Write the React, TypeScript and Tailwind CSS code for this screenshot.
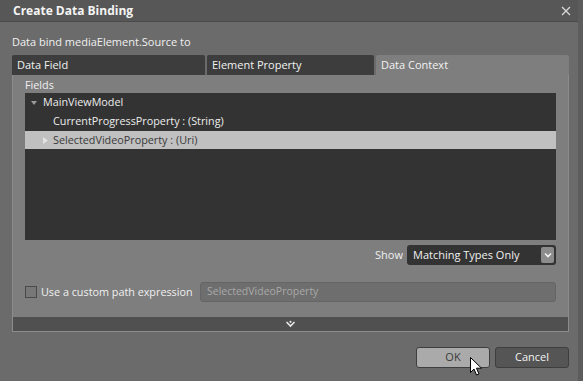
import React from "react";

const font = { fontFamily: '"Open Sans", "Noto Sans", sans-serif' };

const Tab = ({ label, active }: { label: string; active?: boolean }) => (
  <div
    className={
      "h-[20px] flex items-center px-[5px] rounded-t-[2px] text-[11px] " +
      (active ? "bg-[#7e7e7e] text-[#f2f2f2]" : "bg-[#3d3d3d] text-[#f2f2f2]")
    }
  >
    {label}
  </div>
);

export default function App() {
  return (
    <div
      className="relative w-[583px] h-[381px] bg-[#6b6b6b] border-r-[5px] border-[#5c5c5c] flex flex-col overflow-hidden"
      style={font}
    >
      {/* title bar */}
      <div className="h-[22px] shrink-0 bg-[#575757] border-b border-[#4b4b4b] flex items-center justify-between pl-[13px] pr-[7px]">
        <span className="text-[12px] font-bold text-[#f4f4f4] leading-none">Create Data Binding</span>
        <svg width="10" height="10" viewBox="0 0 10 10">
          <path d="M1 1 L9 9 M9 1 L1 9" stroke="#d8d8d8" strokeWidth="1.3" />
        </svg>
      </div>

      <div className="flex flex-col pl-[12px] pr-[9px] pt-[12px]">
        <div className="text-[11px] leading-[16px] text-[#f0f0f0]">Data bind mediaElement.Source to</div>

        {/* tabs */}
        <div className="mt-[5px] grid grid-cols-[193px_167px_1fr] gap-[2px]">
          <Tab label="Data Field" />
          <Tab label="Element Property" />
          <Tab label="Data Context" active />
        </div>

        {/* panel */}
        <div className="bg-[#7e7e7e] border-x border-b border-[#8c8c8c] flex flex-col">
          <div className="flex flex-col px-[12px] pt-[3px] pb-[15px]">
            <div className="text-[10.8px] leading-[14px] text-[#f0f0f0]">Fields</div>
            <div className="mt-[1px] h-[147px] bg-[#333333] flex flex-col text-[10.8px] text-[#ededed]">
              <div className="h-[19px] flex items-center pl-[6px]">
                <svg width="6" height="6" viewBox="0 0 6 6" className="mr-[6px]">
                  <path d="M0 1 L6 1 L3 5 Z" fill="#9a9a9a" />
                </svg>
                MainViewModel
              </div>
              <div className="h-[19px] flex items-center pl-[28px]">CurrentProgressProperty : (String)</div>
              <div className="h-[18px] flex items-center pl-[18px] bg-[#c0c0c0] text-[#3a3a3a]">
                <svg width="5" height="7" viewBox="0 0 5 7" className="mr-[5px]">
                  <path d="M0 0 L5 3.5 L0 7 Z" fill="#e2e2e2" />
                </svg>
                SelectedVideoProperty : (Uri)
              </div>
            </div>

            <div className="mt-[5px] flex items-center justify-end gap-[4px]">
              <span className="text-[11px] text-[#f0f0f0]">Show</span>
              <div className="w-[149px] h-[20px] bg-[#333333] rounded-[3px] flex items-center justify-between pl-[6px] pr-[2px]">
                <span className="text-[11px] text-[#f0f0f0]">Matching Types Only</span>
                <div className="w-[13px] h-[16px] rounded-[2px] bg-[#8c8c8c] flex items-center justify-center">
                  <svg width="8" height="6" viewBox="0 0 8 6">
                    <path d="M1 1.5 L4 4.5 L7 1.5" stroke="#f2f2f2" strokeWidth="1.6" fill="none" />
                  </svg>
                </div>
              </div>
            </div>

            <div className="mt-[17px] h-[20px] flex items-center">
              <div className="w-[12px] h-[12px] bg-[#777777] border border-[#4a4a4a]" />
              <span className="ml-[4px] text-[10.8px] text-[#f0f0f0] w-[159px] whitespace-nowrap">
                Use a custom path expression
              </span>
              <div className="flex-1 h-[20px] bg-[#6e6e6e] border border-[#656565] rounded-[3px] flex items-center pl-[6px]">
                <span className="text-[10.5px] text-[#a9a9a9]">SelectedVideoProperty</span>
              </div>
            </div>
          </div>

          <div className="h-[14px] bg-[#505050] flex items-center justify-center">
            <svg width="11" height="8" viewBox="0 0 11 8">
              <path d="M1.5 2 L5.5 6 L9.5 2" stroke="#e8e8e8" strokeWidth="1.6" fill="none" />
              <circle cx="5.5" cy="1.8" r="1.1" fill="#e8e8e8" />
            </svg>
          </div>
        </div>

        {/* buttons */}
        <div className="mt-[15px] flex justify-end gap-[5px]">
          <div className="w-[74px] h-[21px] rounded-[3px] bg-[#aaaaaa] border border-[#3e3e3e] flex items-center justify-center text-[11px] text-[#3a3a3a]">
            OK
          </div>
          <div className="w-[74px] h-[21px] rounded-[3px] bg-[#555555] border border-[#3e3e3e] flex items-center justify-center text-[11px] text-[#f2f2f2]">
            Cancel
          </div>
        </div>
      </div>

      {/* mouse cursor */}
      <svg className="absolute left-[470px] top-[357px]" width="13" height="20" viewBox="0 0 13 20">
        <path
          d="M0.5 0.5 L0.5 15.5 L4 12 L6.5 18 L9 17 L6.5 11.2 L11.5 11.2 Z"
          fill="#ffffff"
          stroke="#000000"
          strokeWidth="1"
          strokeLinejoin="round"
        />
      </svg>
    </div>
  );
}
